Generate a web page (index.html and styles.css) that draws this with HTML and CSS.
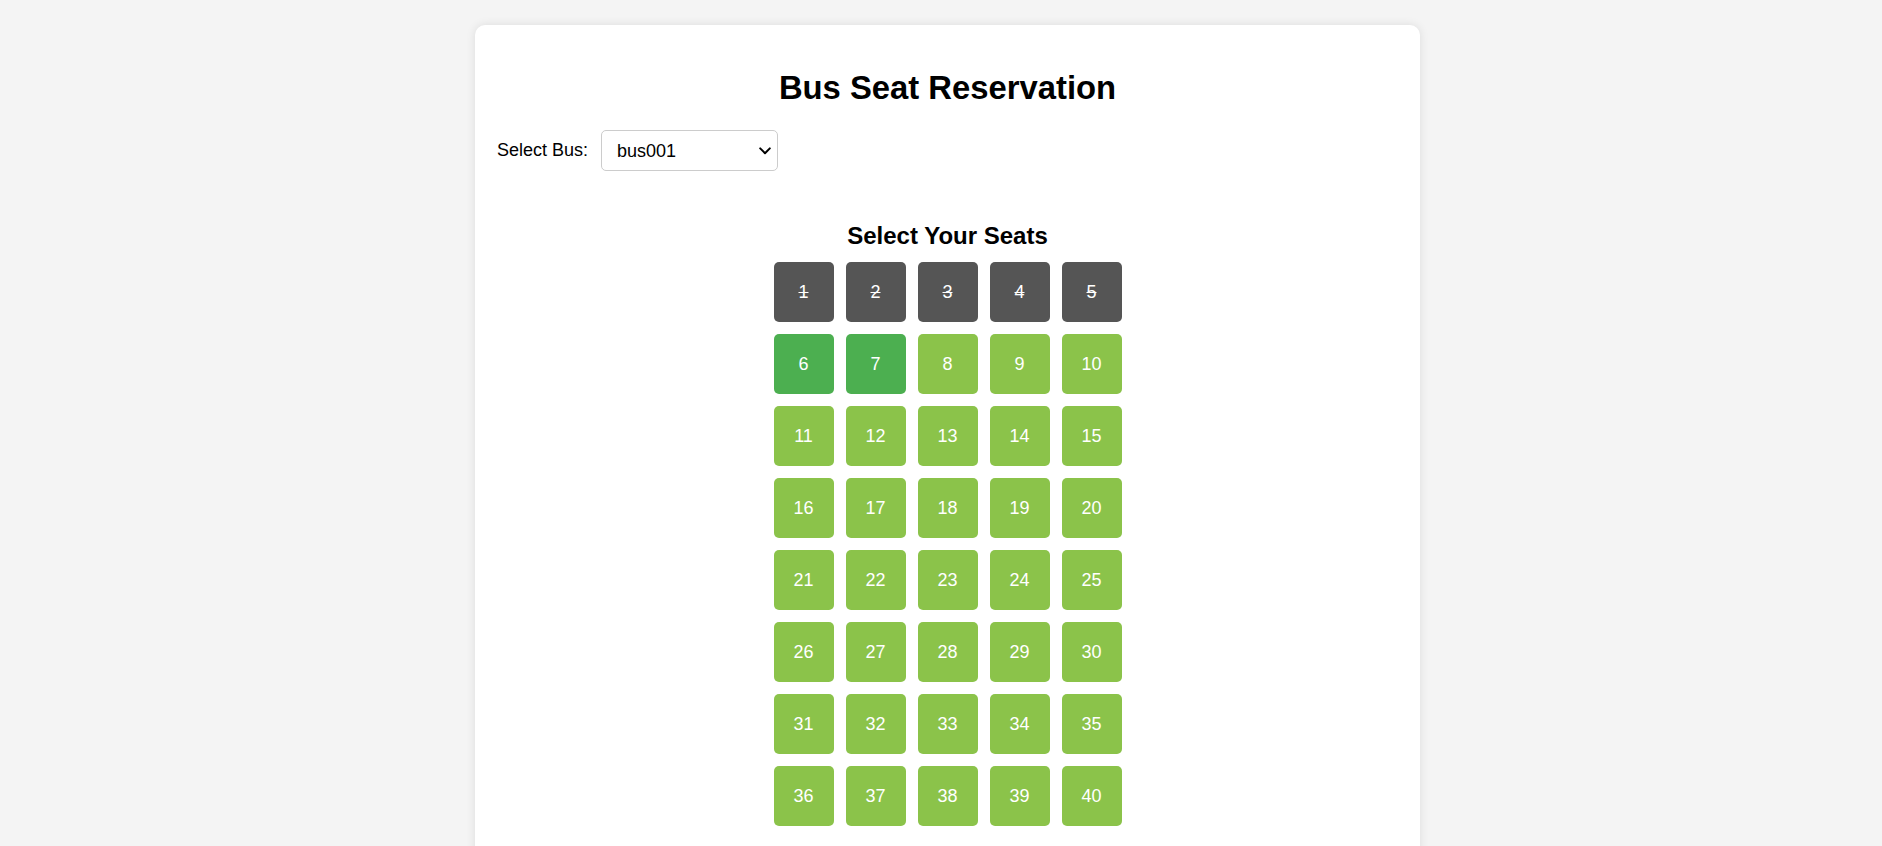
FILE: index.html
```html
<!DOCTYPE html>
<html lang="en">
<head>
<meta charset="UTF-8">
<title>Bus Seat Reservation</title>
<link rel="stylesheet" href="styles.css">
</head>
<body>
<div class="container">
  <h1 class="title">Bus Seat Reservation</h1>
  <div class="bus-row">
    <label class="bus-label" for="bus">Select Bus:</label>
    <div class="select-wrap">
      <select class="bus-select" id="bus">
        <option>bus001</option>
        <option>bus002</option>
        <option>bus003</option>
      </select>
      <svg class="select-arrow" width="12" height="8" viewBox="0 0 12 8" aria-hidden="true">
        <polyline points="1.2,1.4 6,6.2 10.8,1.4" fill="none" stroke="#000" stroke-width="2" stroke-linecap="round" stroke-linejoin="round"/>
      </svg>
    </div>
  </div>
  <h2 class="subtitle">Select Your Seats</h2>
  <div class="seats">
    <div class="seat booked">1</div>
    <div class="seat booked">2</div>
    <div class="seat booked">3</div>
    <div class="seat booked">4</div>
    <div class="seat booked">5</div>
    <div class="seat selected">6</div>
    <div class="seat selected">7</div>
    <div class="seat">8</div>
    <div class="seat">9</div>
    <div class="seat">10</div>
    <div class="seat">11</div>
    <div class="seat">12</div>
    <div class="seat">13</div>
    <div class="seat">14</div>
    <div class="seat">15</div>
    <div class="seat">16</div>
    <div class="seat">17</div>
    <div class="seat">18</div>
    <div class="seat">19</div>
    <div class="seat">20</div>
    <div class="seat">21</div>
    <div class="seat">22</div>
    <div class="seat">23</div>
    <div class="seat">24</div>
    <div class="seat">25</div>
    <div class="seat">26</div>
    <div class="seat">27</div>
    <div class="seat">28</div>
    <div class="seat">29</div>
    <div class="seat">30</div>
    <div class="seat">31</div>
    <div class="seat">32</div>
    <div class="seat">33</div>
    <div class="seat">34</div>
    <div class="seat">35</div>
    <div class="seat">36</div>
    <div class="seat">37</div>
    <div class="seat">38</div>
    <div class="seat">39</div>
    <div class="seat">40</div>
  </div>
</div>
</body>
</html>
```

FILE: styles.css
```css
html, body {
  margin: 0;
}
body {
  background: #f4f4f4;
  font-family: "Liberation Sans", Arial, sans-serif;
  font-size: 18px;
  color: #000;
  padding: 25px 0 40px 13px;
}
.container {
  box-sizing: border-box;
  width: 945px;
  margin: 0 auto;
  background: #fff;
  border-radius: 10px;
  box-shadow: 0 0 10px rgba(0, 0, 0, 0.1);
  padding: 22px 22px 40px;
  min-height: 900px;
}
.title {
  font-size: 32.8px;
  font-weight: bold;
  text-align: center;
  margin: 22px 0 0;
}
.bus-row {
  display: flex;
  align-items: center;
  gap: 13px;
  margin-top: 23px;
}
.bus-label {
  font-size: 18px;
}
.select-wrap {
  position: relative;
  display: flex;
}
.bus-select {
  box-sizing: border-box;
  width: 177px;
  height: 41px;
  font-family: "Liberation Sans", Arial, sans-serif;
  font-size: 18px;
  padding: 0 30px 0 15px;
  border: 1px solid #ccc;
  border-radius: 5px;
  background: #fff;
  color: #000;
  appearance: none;
  -webkit-appearance: none;
}
.select-arrow {
  position: absolute;
  right: 7px;
  top: 17px;
  pointer-events: none;
}
.subtitle {
  font-size: 24px;
  font-weight: bold;
  text-align: center;
  margin: 50.5px 0 12.5px;
}
.seats {
  display: grid;
  grid-template-columns: repeat(5, 60px);
  gap: 12px;
  justify-content: center;
}
.seat {
  width: 60px;
  height: 60px;
  border-radius: 5px;
  background: #8bc34a;
  color: #fff;
  font-size: 18px;
  display: flex;
  align-items: center;
  justify-content: center;
}
.seat.selected {
  background: #4caf50;
}
.seat.booked {
  background: #555;
  text-decoration: line-through;
}
```
